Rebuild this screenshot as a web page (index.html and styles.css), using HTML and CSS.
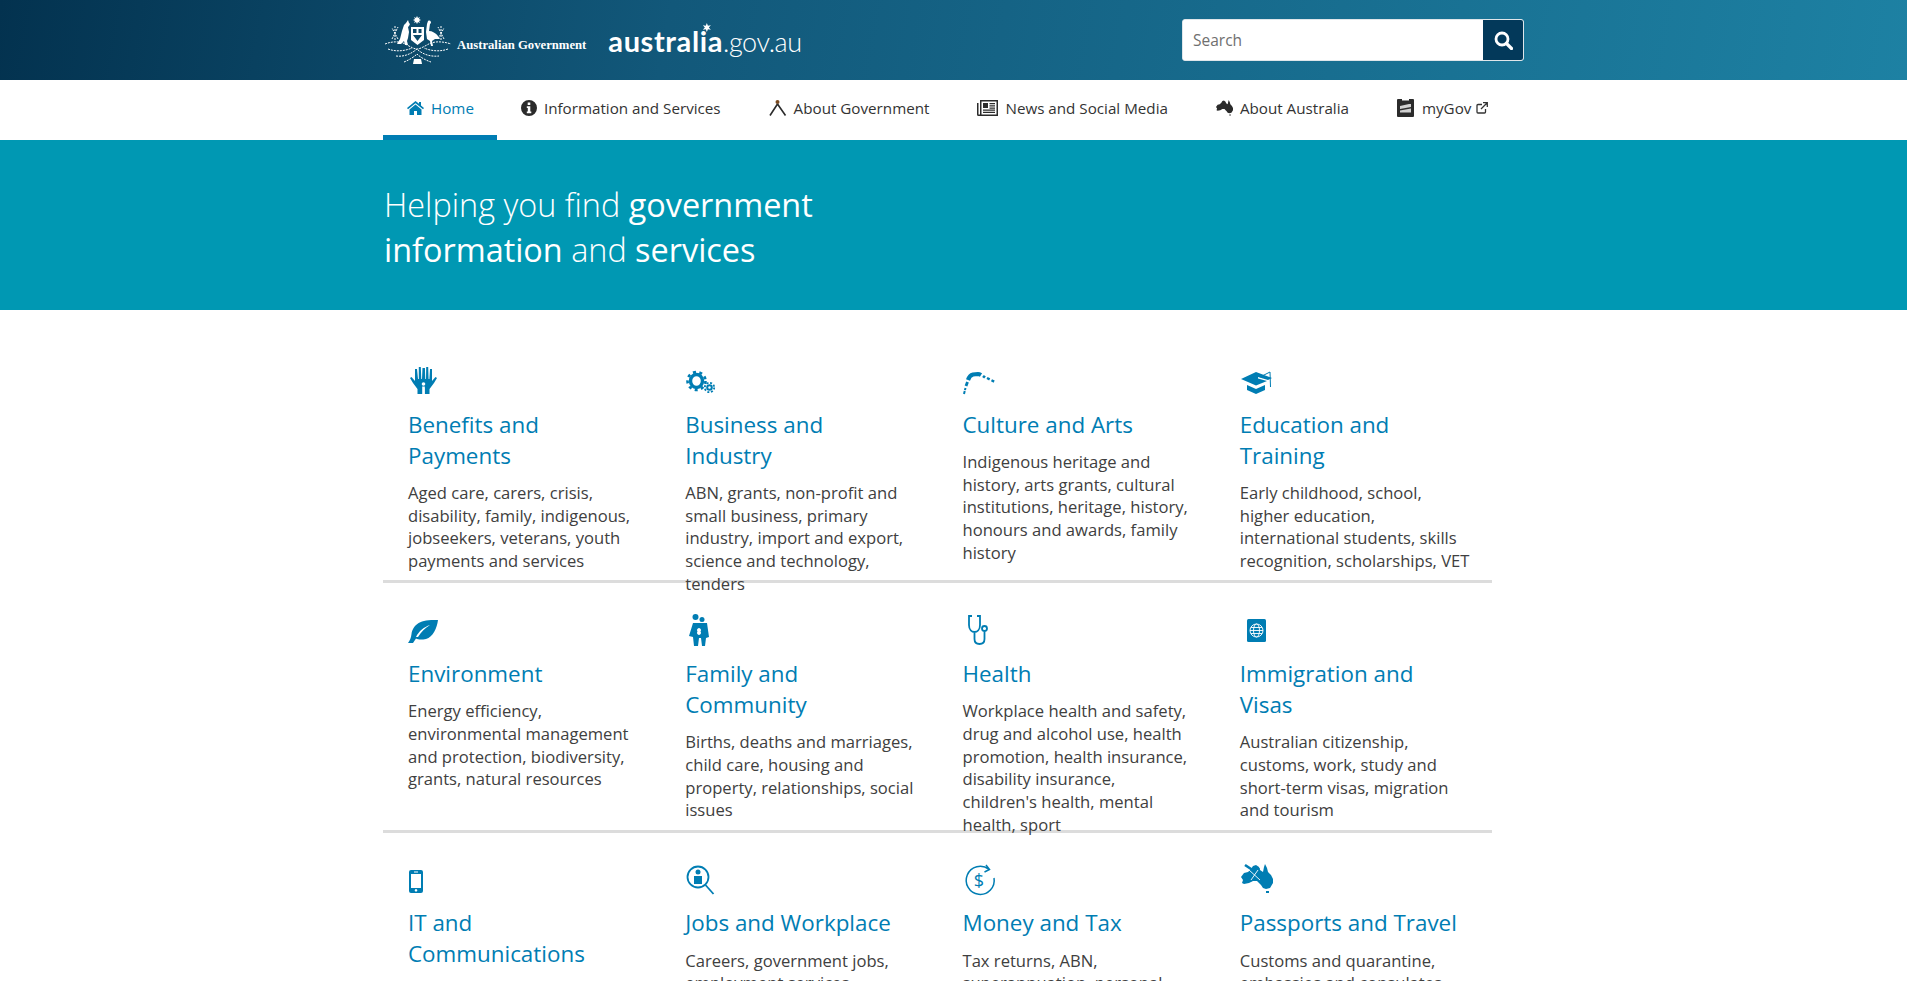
FILE: index.html
```html
<!DOCTYPE html>
<html>
<head>
    <title>australia.gov.au</title>
    <link rel="stylesheet" href="styles.css">
</head>
<body>
    <header class="top">
        <div class="top-inner">
            <a class="crest" href="#">
                <svg class="arms" width="68" height="50" viewBox="0 0 68 50">
                    <g fill="#fff">
                        <path d="M33 1l1 2 2-1-1 2 2 1-2 1 1 2-2-1-1 2-1-2-2 1 1-2-2-1 2-1-1-2 2 1z"/>
                        <path d="M24 5l1 3 1 1-1 2-1 1 1 5-1 6-1 3 1 4h-3l-1-4-3 3h-4l3-5 2-8 2-6 2-2z"/>
                        <path d="M44 6c2-1 3 0 3 2l-1 1-1 7c3 0 7 2 9 5l2 3-5 0-3 2 1 5h-2l-1-5-3-2-1-7 1-8z"/>
                        <path fill-rule="evenodd" d="M27 12h13v13l-6.500 5-6.500-5zM29 14v4h3.500v-4zM34.500 14v4h3v-4zM29 20l4.500 6 4.500-6z"/>
                        <path d="M30 44h7l1 5h-9z"/>
                    </g>
                    <g fill="none" stroke="#fff" stroke-width="1" stroke-dasharray="2 1">
                        <path d="M1 29c8-3 16-3 22 1 4 2 7 4 10 4s6-2 10-4c6-4 15-4 24-1"/>
                        <path d="M4 34c8 3 17 2 24-1M64 34c-8 3-17 2-24-1"/>
                        <path d="M12 41c8 1 15-2 21-7 5 5 13 8 22 7"/>
                        <path d="M20 47c5-2 10-5 13-8 3 3 8 6 14 8"/>
                        <path d="M11 25V10M14 24L8 13M8 24L14 12M57 25V10M54 24l6-11M60 24l-6-12"/>
                    </g>
                </svg>
                <span class="gov-name">Australian Government</span>
            </a>
            <a class="site-name" href="#"><b>australia</b><i>.gov.au</i><span class="star"></span></a>
            <form class="search">
                <input type="text" placeholder="Search">
                <button type="button" aria-label="Search">
                    <svg width="19" height="19" viewBox="0 0 19 19"><circle cx="8" cy="8" r="6" fill="none" stroke="#fff" stroke-width="2.800"/><path d="M12.500 12.500l5 5" stroke="#fff" stroke-width="3.200" stroke-linecap="round"/></svg>
                </button>
            </form>
        </div>
    </header>

    <nav class="nav">
        <div class="nav-inner">
            <a class="nav-item active" href="#">
                <svg class="nav-icon" width="17" height="14" viewBox="0 0 17 14"><path d="M8.500 0L0 7l1 1.200L8.500 2.200 16 8.200 17 7l-3-2.500V1h-2v1.800zM8.500 3.500L2.500 8.500V14h4.500v-4h3v4h4.500V8.500z"/></svg>
                Home
            </a>
            <a class="nav-item" href="#">
                <svg class="nav-icon" width="16" height="16" viewBox="0 0 16 16"><path fill-rule="evenodd" d="M8 0a8 8 0 1 0 0 16A8 8 0 0 0 8 0zM6.700 2.500h2.600v2.400H6.700zM5.800 6.300h3.500v5.200h1v1.700H5.800v-1.700h1V8H5.800z"/></svg>
                Information and Services
            </a>
            <a class="nav-item" href="#">
                <svg class="nav-icon" width="18" height="17" viewBox="0 0 18 17"><circle cx="8.500" cy="2" r="2" fill="#7a4a20"/><path d="M8.500 4L1 15.500M8.500 4l8 11.500" fill="none" stroke-width="1.600" stroke="#2b2b2b"/></svg>
                About Government
            </a>
            <a class="nav-item" href="#">
                <svg class="nav-icon" width="21" height="16" viewBox="0 0 21 16"><path fill-rule="evenodd" d="M3 0h18v16H1.500A1.500 1.500 0 0 1 0 14.500V3h1.500v11.500H3zM4.500 1.500v13H19.500v-13zM6 3h5v5H6zM12.500 3h5.500v1.300h-5.500zM12.500 5.200h5.500v1.300h-5.500zM12.500 7.400h5.500v1.300h-5.500zM6 9.500h12v1.300H6zM6 11.800h12v1.300H6z"/></svg>
                News and Social Media
            </a>
            <a class="nav-item" href="#">
                <svg class="nav-icon" width="17" height="16" viewBox="0 0 32 30"><path d="M0 13L3 9 7 8 10 5 12 2 15 1 18 3 19 6 22 8 23 3 24 0 26 4 27 8 30 11 32 15V19L29 24 25 25 22 24 20 21 18 19 16 17H12L8 19 3 20 1 19 2 16zM25 27h3v2h-3z"/></svg>
                About Australia
            </a>
            <a class="nav-item" href="#">
                <svg class="nav-icon mygov-icon" width="17" height="18" viewBox="0 0 17 18"><path d="M1 0h4v1.500h7V0h4a1 1 0 0 1 1 1v16a1 1 0 0 1-1 1H1a1 1 0 0 1-1-1V1a1 1 0 0 1 1-1z"/><path d="M3 7l9-2 2 0v3l-11 2zM3 11.500l11-2v4H3z" fill="#d0d0d0"/></svg>
                myGov
                <svg class="ext-icon" width="12" height="12" viewBox="0 0 12 12"><path d="M9.500 7v3a1 1 0 0 1-1 1h-6.500a1 1 0 0 1-1-1V3.500a1 1 0 0 1 1-1h4M7 .7h4.300V5M11 1L5 7" fill="none" stroke="#333" stroke-width="1.300"/></svg>
            </a>
        </div>
    </nav>

    <section class="hero">
        <div class="hero-inner">
            <h1>Helping you find <strong>government information</strong> and <strong>services</strong></h1>
        </div>
    </section>

    <main class="topics">
        <div class="topic-row">
            <a class="topic" href="#">
                <svg class="topic-icon" width="40" height="34" viewBox="0 0 40 34"><path d="M7 6h2l1 10h.8V4h2l.5 12h.7l.5-11h2v18l-1.500 2v6H9.500v-5L5 20 2 15l1.500-1 3.500 4z"/><path d="M24 6h-2l-.6 10h-.8l-.4-12h-2l-.2 12h-.7l-.4-11H15v18l1.500 2v6h5v-5L26 20l3-5-1.500-1L24 18z"/><circle cx="15.500" cy="21" r="1.800" fill="#fff"/><path d="M14.200 23.500h2.600V31h-2.600z" fill="#fff"/></svg>
                <h2>Benefits and Payments</h2>
                <p>Aged care, carers, crisis, disability, family, indigenous, jobseekers, veterans, youth payments and services</p>
            </a>
            <a class="topic" href="#">
                <svg class="topic-icon" width="40" height="34" viewBox="0 0 40 34"><g fill="none" stroke="#007db3"><ellipse cx="11.500" cy="18" rx="6" ry="6.500" stroke-width="3.400"/><circle cx="11.500" cy="18" r="9" stroke-width="2.600" stroke-dasharray="3 3.430"/><circle cx="24.500" cy="24.500" r="2.300" stroke-width="2"/><circle cx="24.500" cy="24.500" r="4.700" stroke-width="1.800" stroke-dasharray="2 1.700"/></g></svg>
                <h2>Business and Industry</h2>
                <p>ABN, grants, non-profit and small business, primary industry, import and export, science and technology, tenders</p>
            </a>
            <a class="topic" href="#">
                <svg class="topic-icon" width="40" height="34" viewBox="0 0 40 34"><g fill="none" stroke="#007db3"><path d="M1 31l1.500-6" stroke-width="2" stroke-dasharray="3 1"/><path d="M3 23l1.500-4" stroke-width="2.800"/><path d="M5 17c1-3 3-5 5-5.500l5-.5c1 0 2 .4 3 1" stroke-width="4.200"/><path d="M20 13l2 1.500" stroke-width="2.800"/><path d="M24 15l8 4" stroke-width="2.400" stroke-dasharray="3 2"/></g></svg>
                <h2>Culture and Arts</h2>
                <p>Indigenous heritage and history, arts grants, cultural institutions, heritage, history, honours and awards, family history</p>
            </a>
            <a class="topic" href="#">
                <svg class="topic-icon" width="40" height="34" viewBox="0 0 40 34"><path d="M16 9l-15 7 15 6.500L27 18l-9-2.500v-1.500l10 3 4-2zM7 22l9 4 9-4v5l-9 4-9-4z"/><path d="M20 14l10-5 .5 15" fill="none" stroke="#007db3" stroke-width="1"/></svg>
                <h2>Education and Training</h2>
                <p>Early childhood, school, higher education, international students, skills recognition, scholarships, VET</p>
            </a>
        </div>

        <div class="topic-row">
            <a class="topic" href="#">
                <svg class="topic-icon" width="40" height="34" viewBox="0 0 40 34"><path fill-rule="evenodd" d="M0 31c2-3 3-5 3.500-9C5 13 11 7 30 8c-1 8-5 17-12 19-5 1-8 .500-10-.500l-3 4.500zM8 25c3-6 8-10 14-12-5 3-9 7-12 12z"/></svg>
                <h2>Environment</h2>
                <p>Energy efficiency, environmental management and protection, biodiversity, grants, natural resources</p>
            </a>
            <a class="topic" href="#">
                <svg class="topic-icon" width="40" height="34" viewBox="0 0 40 34"><circle cx="10.500" cy="5" r="3"/><circle cx="17" cy="7.500" r="2.500"/><path fill-rule="evenodd" d="M8 11h14l2 14-3 1-1 8h-3l-1-8h-2l-1 8H9l-1-9-4-1zM12.500 19.500a2 2 0 1 0 3 0 2 2 0 1 0-3 0z"/></svg>
                <h2>Family and Community</h2>
                <p>Births, deaths and marriages, child care, housing and property, relationships, social issues</p>
            </a>
            <a class="topic" href="#">
                <svg class="topic-icon" width="40" height="34" viewBox="0 0 40 34" fill="none" stroke="#007db3" stroke-width="1.800"><path d="M9 4H6v9c0 5 3 7 5.500 7s5.500-2 5.500-7V4h-3M11.500 20v7c0 3 2 5 5 5s5-2 5-5v-7"/><circle cx="21.500" cy="16.500" r="2.500"/></svg>
                <h2>Health</h2>
                <p>Workplace health and safety, drug and alcohol use, health promotion, health insurance, disability insurance, children's health, mental health, sport</p>
            </a>
            <a class="topic" href="#">
                <svg class="topic-icon" width="40" height="34" viewBox="0 0 40 34"><rect x="7" y="7" width="19" height="23" rx="1.500"/><g fill="none" stroke="#fff" stroke-width=".9"><circle cx="16.500" cy="18.500" r="6.500"/><ellipse cx="16.500" cy="18.500" rx="3" ry="6.500"/><path d="M10 18.500h13M11 15.500h11M11 21.500h11"/></g></svg>
                <h2>Immigration and Visas</h2>
                <p>Australian citizenship, customs, work, study and short-term visas, migration and tourism</p>
            </a>
        </div>

        <div class="topic-row">
            <a class="topic" href="#">
                <svg class="topic-icon" width="40" height="34" viewBox="0 0 40 34"><path fill-rule="evenodd" d="M1 10a2 2 0 0 1 2-2h10a2 2 0 0 1 2 2v19a2 2 0 0 1-2 2H3a2 2 0 0 1-2-2zM3 12v14h10V12zM6 9.500v1h4v-1zM8 27a1.300 1.300 0 1 0 .01 0z"/></svg>
                <h2>IT and Communications</h2>
                <p>Broadband, digital, internet safety, mobile coverage, online security</p>
            </a>
            <a class="topic" href="#">
                <svg class="topic-icon" width="40" height="34" viewBox="0 0 40 34"><circle cx="13" cy="15" r="10.500" fill="none" stroke="#007db3" stroke-width="1.800"/><circle cx="13" cy="10" r="2.500"/><path d="M9 14h8v8H9z"/><path d="M20.500 23l8 9" stroke="#007db3" stroke-width="1.800"/></svg>
                <h2>Jobs and Workplace</h2>
                <p>Careers, government jobs, employment services</p>
            </a>
            <a class="topic" href="#">
                <svg class="topic-icon" width="40" height="34" viewBox="0 0 40 34"><path d="M26 7.500A14 14 0 1 0 31 16M23 3l3.500 4.500-5 2.500" fill="none" stroke="#007db3" stroke-width="1.500"/><text class="dollar" x="16" y="24.500" text-anchor="middle">$</text></svg>
                <h2>Money and Tax</h2>
                <p>Tax returns, ABN, superannuation, personal finance</p>
            </a>
            <a class="topic" href="#">
                <svg class="topic-icon" width="40" height="34" viewBox="0 0 40 34"><path d="M1 15L4 11 8 10 11 7 13 4 16 3 19 5 20 8 23 10 24 5 25 2 27 6 28 10 31 13 33 17V21L30 26 26 27 23 26 21 23 19 21 17 19H13L9 21 4 22 2 21 3 18zM26 29h3v2h-3z"/><path d="M5 3l6 4 12 11M19 6L10 19" fill="none" stroke="#007db3" stroke-width="2.600"/><path d="M9 8l11 10M18 8l-7 10" fill="none" stroke="#fff" stroke-width=".9"/></svg>
                <h2>Passports and Travel</h2>
                <p>Customs and quarantine, embassies and consulates</p>
            </a>
        </div>
    </main>
</body>
</html>
```

FILE: styles.css
```css
html, body {
    margin: 0;
    height: 100%;
    overflow: hidden;
}
body {
    font-family: "Open Sans", Arial, sans-serif;
    background-color: #fff;
    color: #333;
}
a {
    color: inherit;
    text-decoration: none;
}

/* header */
.top {
    height: 80px;
    background: linear-gradient(100deg, #03324f 0%, #12587a 35%, #1d81a3 100%);
}
.top-inner {
    width: 1141px;
    margin-left: 383px;
    height: 100%;
    display: flex;
    align-items: center;
}
.crest {
    display: flex;
    align-items: center;
    color: #fff;
    margin-left: 1px;
}
.arms {
    display: block;
}
.gov-name {
    font-family: "Liberation Serif", serif;
    font-weight: bold;
    font-size: 12.7px;
    margin: 10px 0 0 5px;
    white-space: nowrap;
}
.site-name {
    position: relative;
    margin-left: 22px;
    color: #fff;
    font-family: Lato, sans-serif;
    font-size: 29px;
    line-height: 40px;
    margin-top: 3px;
    white-space: nowrap;
}
.site-name b {
    font-weight: bold;
    letter-spacing: .6px;
}
.site-name i {
    font-style: normal;
    font-size: 27px;
    font-weight: 300;
    letter-spacing: -.4px;
}
.star {
    position: absolute;
    left: 94px;
    top: 2px;
    width: 9px;
    height: 9px;
    background: #fff;
    clip-path: polygon(50% 0, 62% 30%, 95% 25%, 72% 50%, 95% 75%, 62% 70%, 50% 100%, 38% 70%, 5% 75%, 28% 50%, 5% 25%, 38% 30%);
}
.search {
    display: flex;
    margin-left: auto;
    width: 342px;
    height: 42px;
    box-sizing: border-box;
    border: 1px solid #dfe6ea;
    border-radius: 3px;
    overflow: hidden;
    background: #fff;
}
.search input {
    flex: 1;
    min-width: 0;
    border: 0;
    padding: 0 10px;
    font-family: "Open Sans", sans-serif;
    font-size: 15.500px;
    color: #555;
    outline: none;
}
.search input::placeholder {
    color: #6f6f6f;
}
.search button {
    width: 40px;
    border: 0;
    padding: 0;
    background-color: #03395a;
    display: flex;
    align-items: center;
    justify-content: center;
}

/* nav */
.nav {
    height: 60px;
    background-color: #fff;
}
.nav-inner {
    display: flex;
    margin-left: 383px;
    height: 100%;
}
.nav-item {
    display: flex;
    align-items: center;
    box-sizing: border-box;
    height: 60px;
    padding: 1px 24px 0;
    border-bottom: 5px solid transparent;
    font-size: 15.200px;
    white-space: nowrap;
    color: #333;
    fill: #2b2b2b;
}
.nav-item.active {
    padding-right: 23px;
    color: #007db3;
    fill: #007db3;
    border-bottom-color: #007db3;
}
.nav-icon {
    margin-right: 7px;
    flex: none;
}
.mygov-icon {
    margin-right: 8px;
}
.ext-icon {
    margin-left: 5px;
}

/* hero */
.hero {
    height: 170px;
    background-color: #0098b3;
    color: #fff;
}
.hero-inner {
    margin-left: 384px;
    padding-top: 42px;
    width: 470px;
}
.hero h1 {
    margin: 0;
    font-size: 32.400px;
    font-weight: 300;
    line-height: 45px;
}
.hero strong {
    font-weight: 400;
}

/* topics */
.topics {
    width: 1109px;
    margin-left: 383px;
    padding-top: 24px;
}
.topic-row {
    display: grid;
    grid-template-columns: repeat(4, 1fr);
    height: 249.300px;
    box-sizing: border-box;
    border-bottom: 3px solid #dcdcdc;
}
.topic {
    display: block;
    height: 225px;
    padding: 29px 22.500px 0 25px;
    fill: #007db3;
}
.topic-icon {
    display: block;
    height: 34px;
}
.topic h2 {
    margin: 11.500px 0 0;
    font-size: 22.400px;
    font-weight: 400;
    line-height: 31px;
    color: #007db3;
}
.topic p {
    margin: 11.500px 0 0;
    font-size: 16.600px;
    line-height: 22.700px;
    color: #404040;
}
.dollar {
    font-family: "Open Sans", sans-serif;
    font-size: 18px;
    fill: #007db3;
}
```
